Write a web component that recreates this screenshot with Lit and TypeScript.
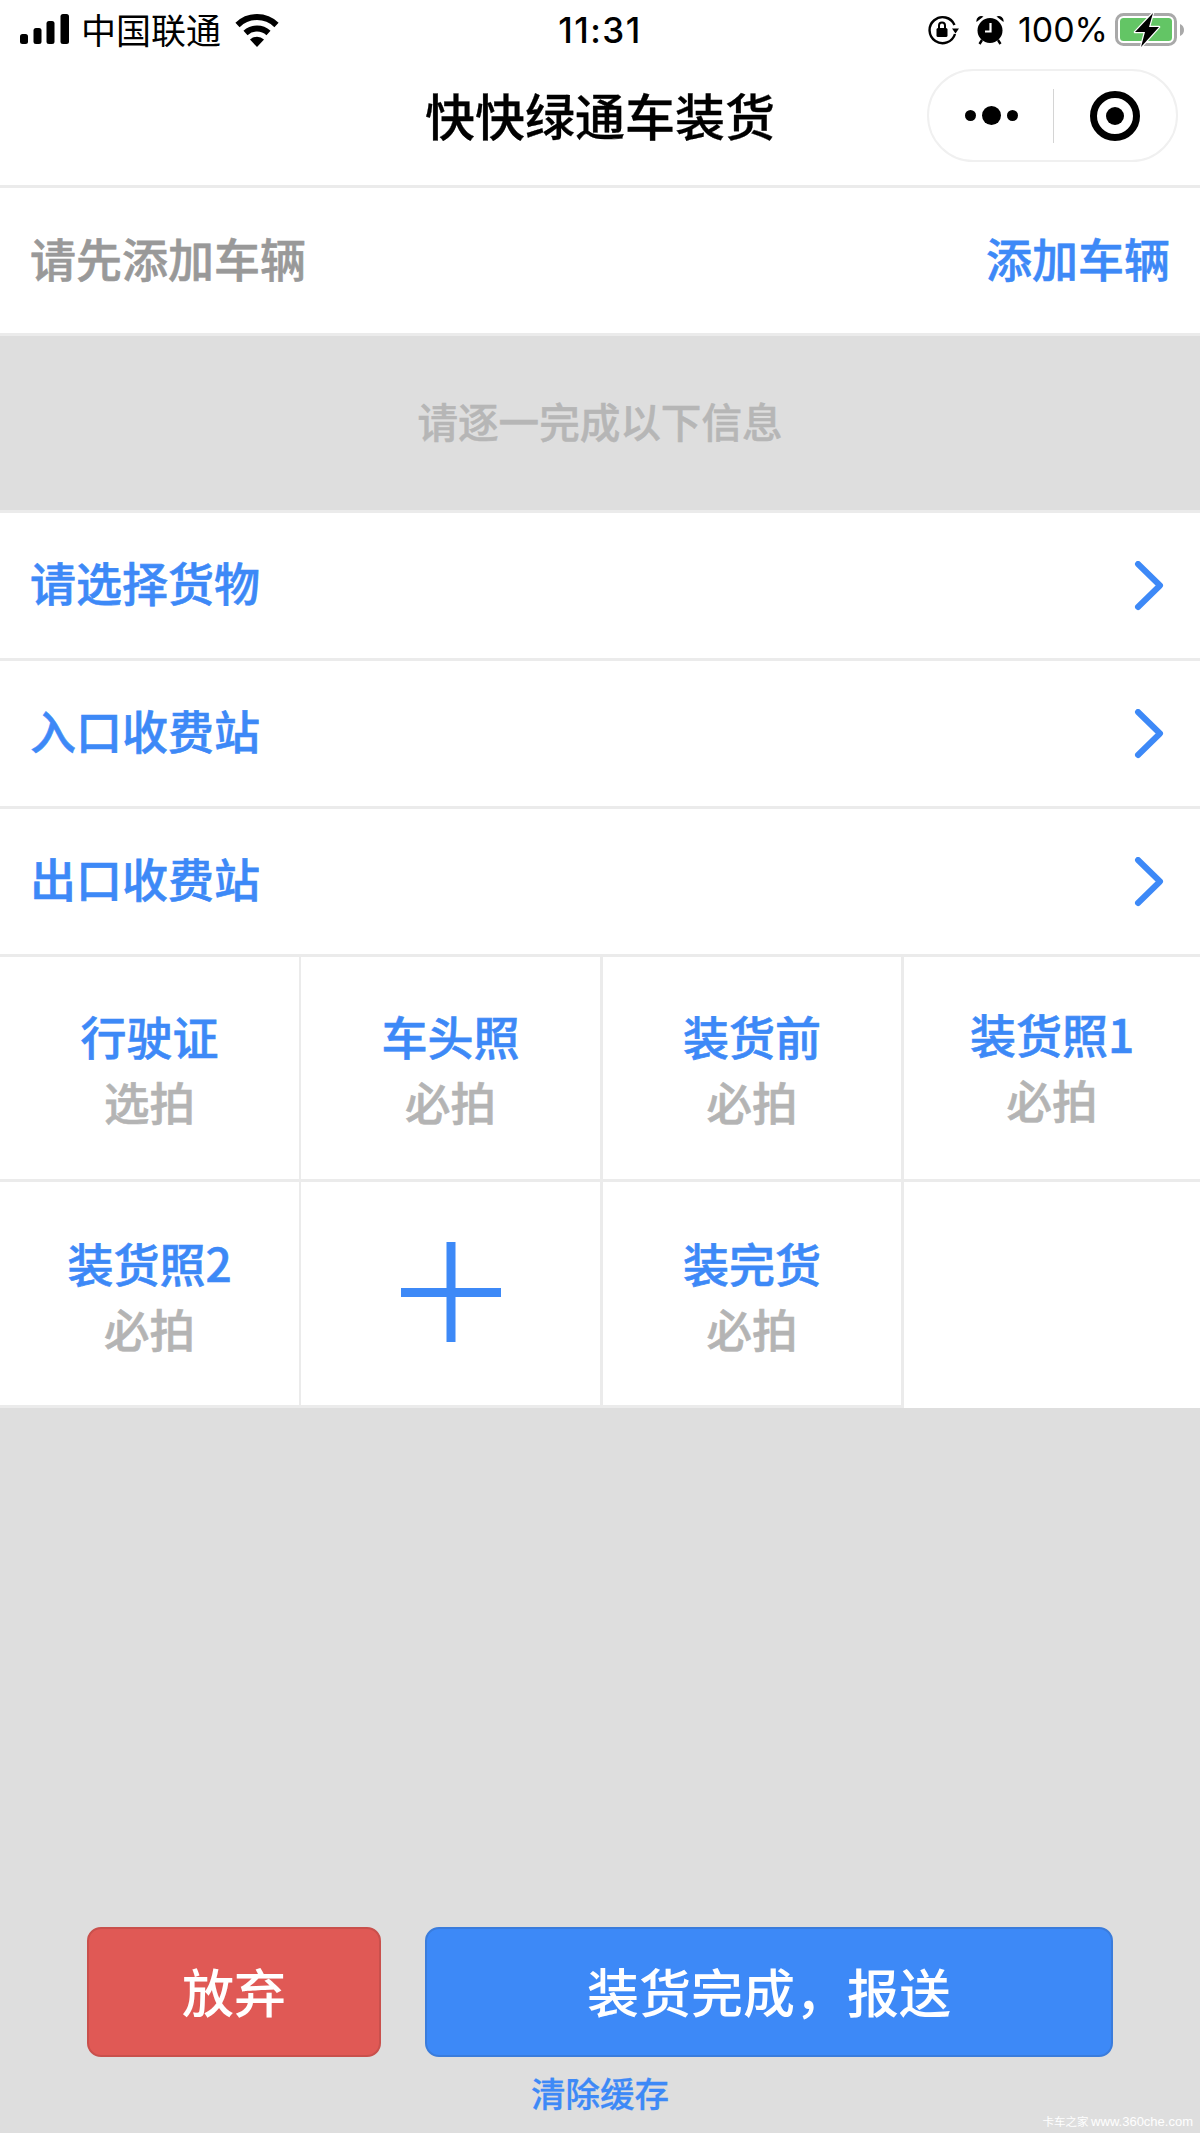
import { LitElement, html, css } from "lit";
import { customElement } from "lit/decorators.js";

type Cell = { label?: string; note?: string; plus?: boolean; shift?: string };

const cells: Cell[] = [
  { label: "行驶证", note: "选拍" },
  { label: "车头照", note: "必拍" },
  { label: "装货前", note: "必拍" },
  { label: "装货照1", note: "必拍", shift: "up" },
  { label: "装货照2", note: "必拍", shift: "down" },
  { plus: true },
  { label: "装完货", note: "必拍", shift: "down" },
  {},
];

const chevron = html`<svg class="chev" width="30" height="50" viewBox="0 0 30 50"><path d="M4 3 L26 24.5 L4 46" fill="none" stroke="#3d89f7" stroke-width="6" stroke-linecap="round" stroke-linejoin="round"/></svg>`;

@customElement("app-root")
export class AppRoot extends LitElement {
  static styles = css`
    :host {
      display: flex;
      flex-direction: column;
      width: 1200px;
      height: 2133px;
      position: relative;
      background: #dedede;
      font-family: "Noto Sans CJK SC", "Liberation Sans", sans-serif;
      color: #000;
      overflow: hidden;
    }
    .head { background: #fff; border-bottom: 3px solid #ebebeb; height: 188px; box-sizing: border-box; }
    .status {
      height: 60px;
      display: grid;
      grid-template-columns: 1fr auto 1fr;
      align-items: center;
      padding: 0 15px 0 19px;
    }
    .left, .right { display: flex; align-items: center; }
    .right { justify-content: flex-end; }
    .carrier { font-size: 35px; line-height: 40px; margin: 0 15px 0 12px; width: 139px; white-space: nowrap; padding-bottom: 3px; }
    .time { font-family: Inter, "Liberation Sans", sans-serif; font-size: 35px; font-weight: 500; line-height: 40px; letter-spacing: 1.5px; margin-left: -4px; }
    .pct { font-family: Inter, "Liberation Sans", sans-serif; font-size: 34px; line-height: 40px; margin: 0 7px 0 14px; }
    .gap { width: 17px; }
    .nav {
      position: relative;
      height: 114px;
      display: flex;
      align-items: center;
      justify-content: center;
    }
    .title { font-size: 50px; font-weight: 500; line-height: 60px; white-space: nowrap; padding-bottom: 7px; -webkit-text-stroke: 0.3px #000; }
    .capsule {
      position: absolute;
      left: 927px;
      top: 9px;
      width: 251px;
      height: 93px;
      box-sizing: border-box;
      border: 2px solid #f0f0f0;
      border-radius: 47px;
      display: flex;
      align-items: center;
      background: #fff;
    }
    .dots { width: 124px; display: flex; align-items: center; gap: 6px; justify-content: center; padding-left: 1px; box-sizing: border-box; }
    .dot { width: 11px; height: 11px; border-radius: 50%; background: #000; }
    .dot.big { width: 19px; height: 19px; }
    .divider { width: 1px; height: 54px; background: #d4d4d4; }
    .target { flex: 1; display: flex; justify-content: center; }
    .row {
      height: 148px;
      box-sizing: border-box;
      background: #fff;
      border-bottom: 3px solid #ebebeb;
      display: flex;
      align-items: center;
      justify-content: space-between;
      padding: 0 30px;
      font-size: 46px;
      font-weight: 500;
      line-height: 60px;
      color: #3d89f7;
      -webkit-text-stroke: 0.6px #3d89f7;
    }
    .row span { padding-bottom: 7px; }
    .row.vehicle { color: #999; -webkit-text-stroke: 0.6px #999; }
    .row.vehicle .add { color: #3d89f7; -webkit-text-stroke: 0.6px #3d89f7; }
    .row .chev { margin-right: 7px; flex: none; }
    .row.pick { padding-right: 29px; }
    .row.pick span { padding-bottom: 10px; }
    .notice {
      height: 177px;
      box-sizing: border-box;
      border-bottom: 3px solid #ebebeb;
      display: flex;
      align-items: center;
      justify-content: center;
      font-size: 40.6px;
      font-weight: 500;
      color: #b6b6b6;
      padding-bottom: 5px;
      -webkit-text-stroke: 0.5px #b6b6b6;
    }
    .grid {
      display: grid;
      grid-template-columns: 301px 302px 301px 296px;
      grid-template-rows: 225px 226px;
      background: #fff;
    }
    .cell {
      box-sizing: border-box;
      border-right: 3px solid #ebebeb;
      border-bottom: 3px solid #ebebeb;
      display: flex;
      flex-direction: column;
      align-items: center;
      justify-content: center;
      font-size: 46px;
      font-weight: 500;
      line-height: 67px;
    }
    .cell:nth-child(4n + 1) { border-right-width: 2px; }
    .cell:nth-child(4n) { border-right: none; }
    .cell:last-child { border-bottom: none; }
    .cell.up { padding-bottom: 4px; }
    .cell.down { padding-top: 3px; }
    .label { color: #3d89f7; white-space: nowrap; -webkit-text-stroke: 0.6px #3d89f7; }
    .note { color: #b4b4b4; font-size: 45.5px; line-height: 65px; white-space: nowrap; -webkit-text-stroke: 0.6px #b4b4b4; }
    .plus { margin-bottom: 3px; }
    .foot { margin-top: auto; }
    .buttons { display: flex; gap: 44px; padding-left: 87px; }
    .btn {
      height: 130px;
      box-sizing: border-box;
      border-radius: 14px;
      border: 2px solid;
      display: flex;
      align-items: center;
      justify-content: center;
      color: #fff;
      font-size: 52px;
      font-weight: 500;
      padding-bottom: 4px;
    }
    .btn.quit { width: 294px; background: #e05955; border-color: #c9504c; }
    .btn.done { width: 688px; background: #3d89f7; border-color: #3a7cdc; }
    .clear {
      text-align: center;
      margin: 10px 0 16px;
      font-size: 34.5px;
      font-weight: 500;
      line-height: 50px;
      color: #3d89f7;
      -webkit-text-stroke: 0.3px #3d89f7;
    }
    .mark {
      position: absolute;
      right: 7px;
      bottom: 3px;
      color: #fff;
      font-size: 11.5px;
      line-height: 16px;
      white-space: nowrap;
    }
    .mark span { font-family: "Liberation Sans", sans-serif; font-size: 13px; }
  `;

  private signal() {
    return html`<svg width="50" height="32" viewBox="0 0 50 32">
      <rect x="1" y="20" width="8" height="10" rx="2.5"/>
      <rect x="14.5" y="14" width="8" height="16" rx="2.5"/>
      <rect x="27.5" y="7" width="8" height="23" rx="2.5"/>
      <rect x="41.5" y="0" width="8.5" height="30" rx="2.5"/>
    </svg>`;
  }

  private wifi() {
    return html`<svg width="44" height="33" viewBox="0 0 44 33">
      <g fill="none" stroke="#000" stroke-width="6">
        <path d="M2.5 11 A28 28 0 0 1 41.5 11"/>
        <path d="M10.5 19 A17 17 0 0 1 33.5 19"/>
      </g>
      <path d="M15 25.5 A10.5 10.5 0 0 1 29 25.5 L22 33 Z"/>
    </svg>`;
  }

  private rotationLock() {
    return html`<svg width="32" height="30" viewBox="0 0 32 30">
      <path d="M28 19 A13 13 0 1 1 27.5 10" fill="none" stroke="#000" stroke-width="2.4"/>
      <path d="M25 13.5 L32 13.5 L28.5 18.5 Z"/>
      <rect x="9.5" y="13" width="11" height="9" rx="1.5"/>
      <path d="M12 13 V10.5 A3 3 0 0 1 18 10.5 V13" fill="none" stroke="#000" stroke-width="2"/>
    </svg>`;
  }

  private alarm() {
    return html`<svg width="28" height="30" viewBox="0 0 28 30">
      <circle cx="14" cy="15.5" r="12.5"/>
      <path d="M0.5 7 A5 5 0 0 1 7.5 1.5 Z M27.5 7 A5 5 0 0 0 20.5 1.5 Z"/>
      <path d="M6 25 L3.5 29 M22 25 L24.5 29" stroke="#000" stroke-width="2.4"/>
      <path d="M14.5 8 V16.5 H9" fill="none" stroke="#fff" stroke-width="2.2"/>
    </svg>`;
  }

  private battery() {
    return html`<svg width="70" height="34" viewBox="0 0 70 34">
      <rect x="1.5" y="1.5" width="59" height="30" rx="7" fill="none" stroke="#a9a9a9" stroke-width="3"/>
      <rect x="5" y="5" width="52" height="23" rx="3.5" fill="#63c565"/>
      <path d="M65 11 C67.5 12 69 14 69 17 C69 20 67.5 22 65 23 Z" fill="#a9a9a9"/>
      <path d="M38 0 L20 19 H30 L26 34 L44 14 H34 Z" fill="#000" stroke="#fff" stroke-width="2.5" stroke-linejoin="round" paint-order="stroke"/>
    </svg>`;
  }

  private target() {
    return html`<svg width="52" height="52" viewBox="0 0 52 52">
      <circle cx="26" cy="26" r="21.5" fill="none" stroke="#000" stroke-width="7"/>
      <circle cx="26" cy="26" r="9"/>
    </svg>`;
  }

  private plus() {
    return html`<svg class="plus" width="100" height="100" viewBox="0 0 100 100">
      <rect x="45.5" y="0" width="9" height="100" fill="#3d89f7"/>
      <rect x="0" y="46" width="100" height="9" fill="#3d89f7"/>
    </svg>`;
  }

  render() {
    return html`
      <div class="head">
        <div class="status">
          <div class="left">${this.signal()}<span class="carrier">中国联通</span>${this.wifi()}</div>
          <div class="time">11:31</div>
          <div class="right">${this.rotationLock()}<span class="gap"></span>${this.alarm()}<span class="pct">100%</span>${this.battery()}</div>
        </div>
        <div class="nav">
          <div class="title">快快绿通车装货</div>
          <div class="capsule">
            <div class="dots"><span class="dot"></span><span class="dot big"></span><span class="dot"></span></div>
            <div class="divider"></div>
            <div class="target">${this.target()}</div>
          </div>
        </div>
      </div>
      <div class="row vehicle"><span>请先添加车辆</span><span class="add">添加车辆</span></div>
      <div class="notice">请逐一完成以下信息</div>
      ${["请选择货物", "入口收费站", "出口收费站"].map(
        (t) => html`<div class="row pick"><span>${t}</span>${chevron}</div>`
      )}
      <div class="grid">
        ${cells.map(
          (c) => html`<div class="cell ${c.shift ?? ""}">
            ${c.plus ? this.plus() : c.label ? html`<span class="label">${c.label}</span><span class="note">${c.note}</span>` : ""}
          </div>`
        )}
      </div>
      <div class="foot">
        <div class="buttons">
          <div class="btn quit">放弃</div>
          <div class="btn done">装货完成，报送</div>
        </div>
        <div class="clear">清除缓存</div>
      </div>
      <div class="mark">卡车之家 <span>www.360che.com</span></div>
    `;
  }
}
